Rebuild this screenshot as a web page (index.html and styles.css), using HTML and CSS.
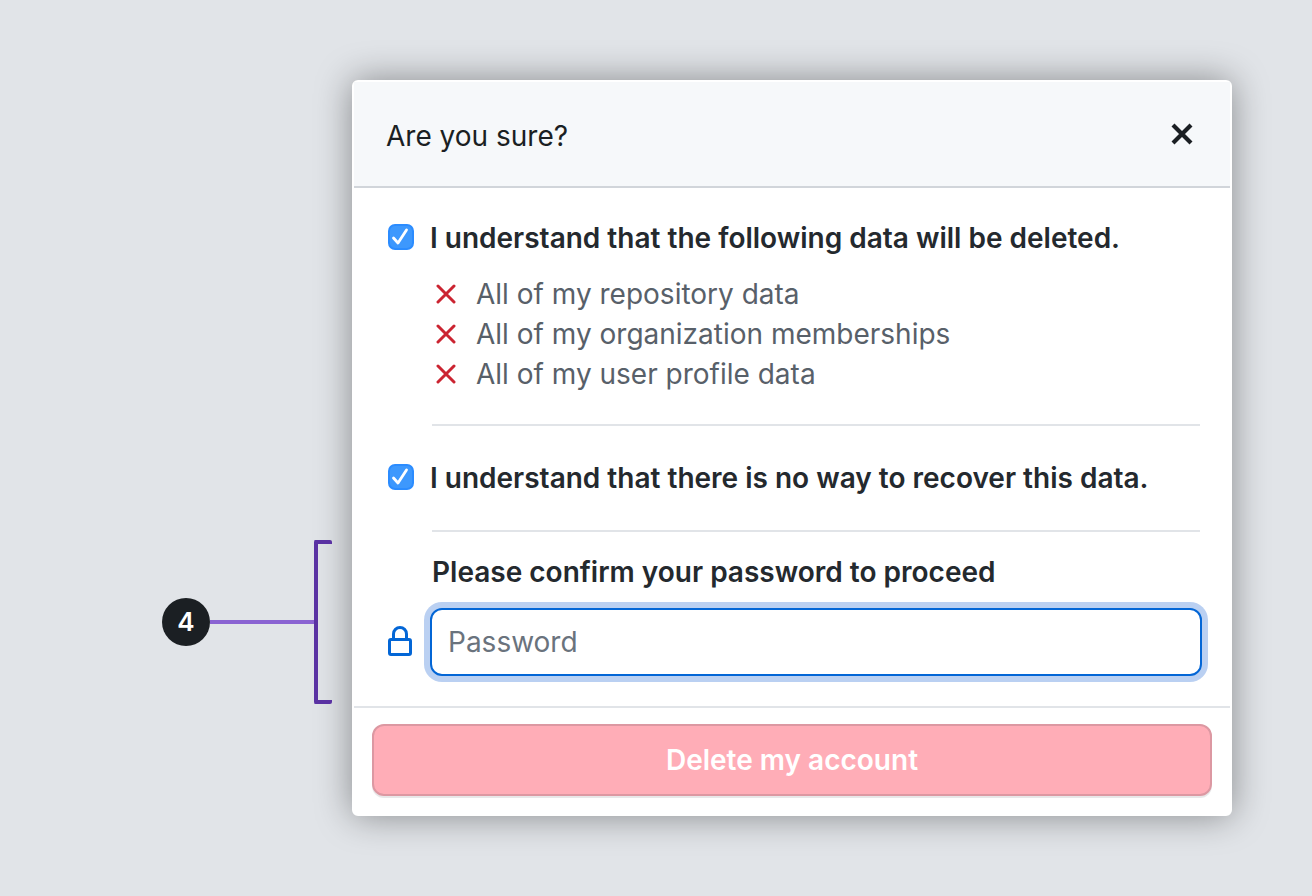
FILE: index.html
```html
<!DOCTYPE html>
<html lang="en">
<head>
<meta charset="utf-8">
<title>Delete account</title>
<link rel="stylesheet" href="styles.css">
</head>
<body>
<main class="page">
  <div class="callout">
    <span class="callout-number">4</span>
    <span class="callout-line"></span>
    <span class="callout-bracket"></span>
  </div>
  <form class="dialog" role="dialog" aria-labelledby="dialog-title">
    <header class="dialog-header">
      <h1 class="dialog-title" id="dialog-title">Are you sure?</h1>
      <button class="close" type="button" aria-label="Close">
        <svg width="24" height="24" viewBox="0 0 24 24" aria-hidden="true"><path d="M3 3l18 18M21 3L3 21" fill="none" stroke="currentColor" stroke-width="4.2"/></svg>
      </button>
    </header>
    <div class="dialog-body">
      <section class="item">
        <input class="check" type="checkbox" id="confirm-data" checked>
        <div class="item-content">
          <label class="item-label" for="confirm-data">I understand that the following data will be deleted.</label>
          <ul class="losses">
            <li class="loss"><svg class="cross" viewBox="0 0 20 20" aria-hidden="true"><path d="M2 2l16 16M18 2L2 18"/></svg>All of my repository data</li>
            <li class="loss"><svg class="cross" viewBox="0 0 20 20" aria-hidden="true"><path d="M2 2l16 16M18 2L2 18"/></svg>All of my organization memberships</li>
            <li class="loss"><svg class="cross" viewBox="0 0 20 20" aria-hidden="true"><path d="M2 2l16 16M18 2L2 18"/></svg>All of my user profile data</li>
          </ul>
        </div>
      </section>
      <section class="item item-divided">
        <input class="check" type="checkbox" id="confirm-recover" checked>
        <div class="item-content">
          <label class="item-label" for="confirm-recover">I understand that there is no way to recover this data.</label>
        </div>
      </section>
      <section class="password">
        <label class="password-label" for="password">Please confirm your password to proceed</label>
        <div class="password-row">
          <svg class="lock" width="24" height="32" viewBox="0 0 24 32" aria-hidden="true"><rect x="1.5" y="13.5" width="21" height="15" rx="1.5"/><path d="M5.5 13.5V8a6.5 6.5 0 0 1 13 0v5.500"/></svg>
          <input class="password-input" type="password" id="password" placeholder="Password">
        </div>
      </section>
    </div>
    <footer class="dialog-footer">
      <button class="delete" type="submit">Delete my account</button>
    </footer>
  </form>
</main>
</body>
</html>
```
FILE: styles.css
```css
* {
  box-sizing: border-box;
}

body {
  margin: 0;
  background: #e1e4e8;
  color: #24292e;
  font: 28px/40px Inter, "Liberation Sans", sans-serif;
}

.page {
  display: flex;
  padding: 80px 80px 80px 162px;
}

.callout {
  z-index: 1;
  display: flex;
  flex: 0 0 170px;
  align-items: center;
  align-self: flex-end;
  height: 164px;
  margin: 0 20px 112px 0;
}

.callout-number {
  width: 48px;
  height: 48px;
  border-radius: 50%;
  background: #1b1f23;
  color: #fff;
  font-size: 26px;
  font-weight: 600;
  line-height: 48px;
  text-align: center;
}

.callout-line {
  flex: 1;
  height: 4px;
  background: #8a63d2;
}

.callout-bracket {
  width: 18px;
  height: 100%;
  border: 4px solid #5a32a3;
  border-right: 0;
  border-radius: 2px;
}

.dialog {
  flex: 1;
  min-width: 0;
  border: 2px solid #fff;
  border-radius: 6px;
  background: #fff;
  box-shadow: 0 0 36px rgba(0, 0, 0, 0.4);
}

.dialog-header {
  display: flex;
  align-items: flex-start;
  justify-content: space-between;
  padding: 34px 36px 30px 32px;
  border-bottom: 2px solid #d1d5da;
  background: #f6f8fa;
}

.dialog-title {
  margin: 0;
  color: #1b1f23;
  font-size: 28px;
  font-weight: 400;
  line-height: 40px;
}

.close {
  display: flex;
  margin-top: 6px;
  padding: 0;
  border: 0;
  background: none;
  color: #1b1f23;
}

.dialog-body {
  padding: 30px 30px 30px 34px;
}

.item {
  display: flex;
  gap: 18px;
}

.item-divided {
  padding-top: 32px;
}

.check {
  flex: none;
  width: 26px;
  height: 26px;
  margin: 6px 0 0;
  appearance: none;
  border: 2px solid #2b8cff;
  border-radius: 7px;
  background: #3d98fd url("data:image/svg+xml,%3Csvg xmlns='http://www.w3.org/2000/svg' viewBox='0 0 22 22'%3E%3Cpath d='M3.500 12L8 17L16.500 4' fill='none' stroke='white' stroke-width='2.800' stroke-linecap='round' stroke-linejoin='round'/%3E%3C/svg%3E") center / 100% no-repeat;
}

.item-content {
  flex: 1;
  padding-bottom: 30px;
  border-bottom: 2px solid #e1e4e8;
}

.item-divided .item-content {
  padding-bottom: 32px;
}

.item-label {
  display: block;
  margin-left: -2px;
  font-weight: 600;
}

.losses {
  margin: 16px 0 0;
  padding: 0;
  color: #586069;
  list-style: none;
}

.loss {
  display: flex;
  align-items: center;
  gap: 20px;
  padding-left: 4px;
}

.cross {
  flex: none;
  width: 20px;
  height: 20px;
  fill: none;
  stroke: #cb2431;
  stroke-width: 3;
  stroke-linecap: round;
}

.password {
  padding-top: 20px;
}

.password-label {
  display: block;
  margin-left: 44px;
  font-weight: 600;
}

.password-row {
  display: flex;
  align-items: center;
  gap: 18px;
  margin: 16px -2px 0 0;
}

.lock {
  flex: none;
  fill: none;
  stroke: #0366d6;
  stroke-width: 3;
}

.password-input {
  flex: 1;
  min-width: 0;
  height: 68px;
  padding: 0 16px;
  border: 2px solid #0366d6;
  border-radius: 12px;
  outline: 0;
  background: #fff;
  box-shadow: 0 0 0 6px #bad0f2;
  color: #24292e;
  font: inherit;
}

.password-input::placeholder {
  color: #6a737d;
  opacity: 1;
}

.dialog-footer {
  padding: 16px 18px 18px;
  border-top: 2px solid #e1e4e8;
}

.delete {
  display: block;
  width: 100%;
  height: 72px;
  padding: 0;
  border: 2px solid #dc98a2;
  border-radius: 12px;
  background: #ffadb7;
  box-shadow: 0 2px 0 rgba(27, 31, 35, 0.1);
  color: #fff;
  font: inherit;
  font-weight: 600;
}
```
